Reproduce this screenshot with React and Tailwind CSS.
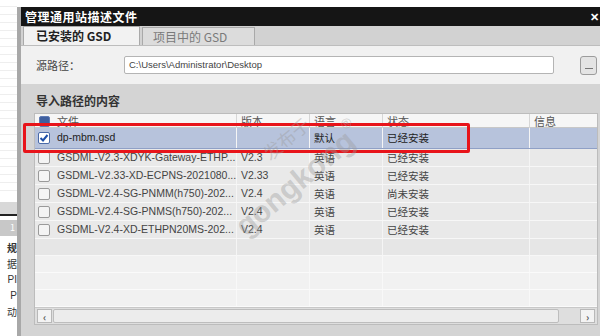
import React from 'react';

const cjk = { fontFamily: '"Noto Sans CJK SC", "Liberation Sans", sans-serif' };
const latin = { fontFamily: '"Liberation Sans", sans-serif' };

const rows = [
  { file: 'dp-mbm.gsd', ver: '', lang: '默认', state: '已经安装', checked: true },
  { file: 'GSDML-V2.3-XDYK-Gateway-ETHP...', ver: 'V2.3', lang: '英语', state: '已经安装' },
  { file: 'GSDML-V2.33-XD-ECPNS-2021080...', ver: 'V2.33', lang: '英语', state: '已经安装' },
  { file: 'GSDML-V2.4-SG-PNMM(h750)-202...', ver: 'V2.4', lang: '英语', state: '尚未安装' },
  { file: 'GSDML-V2.4-SG-PNMS(h750)-202...', ver: 'V2.4', lang: '英语', state: '已经安装' },
  { file: 'GSDML-V2.4-XD-ETHPN20MS-202...', ver: 'V2.4', lang: '英语', state: '已经安装' },
];

const cols = 'grid grid-cols-[18px_184px_73px_73px_147px_1fr]';

function Box({ checked }) {
  return (
    <div
      className={
        'w-[12px] h-[12px] border rounded-[2px] flex items-center justify-center ' +
        (checked ? 'border-[#4a6aa8] bg-white' : 'border-[#9a9a9a] bg-[#f4f4f4]')
      }
    >
      {checked && (
        <svg width="10" height="10" viewBox="0 0 10 10">
          <path d="M1.5 5 L4 7.5 L8.5 2" stroke="#1d4fa8" strokeWidth="2" fill="none" />
        </svg>
      )}
    </div>
  );
}

function EmptyRow({ dark }) {
  const line = dark ? 'border-r border-[#f5f5f5]' : 'border-r border-[#f8f8f8]';
  return (
    <div className={cols + ' h-[17px] border-b ' + (dark ? 'bg-[#e6e6e6] border-[#f7f7f7]' : 'bg-[#f1f1f1] border-[#fafafa]')}>
      <div />
      <div className={line} />
      <div className={line} />
      <div className={line} />
      <div className={line} />
      <div />
    </div>
  );
}

export default function App() {
  return (
    <div className="w-[600px] h-[336px] overflow-hidden flex bg-white text-[#333]" style={cjk}>
      {/* left background panel */}
      <div className="w-[17px] flex flex-col bg-white overflow-hidden">
        <div className="h-[200px] flex flex-col gap-[7px] pt-[6px]">
          {Array.from({ length: 24 }).map((_, i) => (
            <div key={i} className="h-px bg-[#eeeeee]" />
          ))}
        </div>
        <div className="h-[12px] bg-[#d8d8d8] mt-[2px]" />
        <div className="h-[2px] bg-[#222]" />
        <div className="h-[16px] bg-[#c8c8c8] mt-[4px] flex justify-end pr-[2px] text-[9px] text-white leading-[16px]">1</div>
        <div className="flex flex-col items-end text-[10px] leading-[16px] font-bold text-[#333] whitespace-nowrap mt-[4px]">
          <span>规</span>
          <span className="font-normal">据</span>
          <span className="font-normal" style={latin}>PI</span>
          <span className="font-normal" style={latin}>P</span>
          <span className="font-normal">动</span>
        </div>
      </div>

      {/* dialog */}
      <div className="flex-1 flex flex-col border-l-[4px] border-[#a8a8a8] mt-[7px] bg-[#d4d4d4] relative">
        {/* title */}
        <div className="h-[19px] bg-[#151515] flex items-center justify-between pl-[4px] pr-[1px] text-white">
          <span className="text-[12px] font-bold tracking-[0.5px]" style={{ fontFamily: '"Noto Sans CJK SC", serif' }}>管理通用站描述文件</span>
          <span className="text-[11px] font-bold">✕</span>
        </div>

        {/* tabs */}
        <div className="h-[20px] bg-[#d2d2d2] flex items-end pl-[2px] border-b border-[#bdbdbd]">
          <div className="h-[19px] w-[117px] bg-[#f2f2f2] border border-b-0 border-[#a9a9a9] flex items-center pl-[12px] text-[12px] font-bold text-[#222]">
            已安装的 GSD
          </div>
          <div className="h-[18px] w-[113px] ml-[2px] bg-[#dcdcdc] border border-b-0 border-[#a9a9a9] flex items-center pl-[10px] text-[12px] text-[#7a7a7a]">
            项目中的 GSD
          </div>
        </div>

        {/* source path */}
        <div className="h-[38px] bg-[#f1f1f1] flex items-center pl-[15px] pr-[3px]">
          <span className="w-[88px] text-[11px] text-[#444]">源路径：</span>
          <div className="w-[430px] h-[18px] bg-white border border-[#b4b4b4] rounded-[2px] flex items-center pl-[4px] text-[9.5px] text-[#444]" style={latin}>
            C:\Users\Administrator\Desktop
          </div>
          <div className="ml-auto w-[17px] h-[19px] border border-[#9c9c9c] rounded-[3px] bg-[#e4e4e4] flex items-end justify-center pb-[5px]">
            <div className="w-[8px] h-px bg-[#777]" />
          </div>
        </div>

        {/* contents */}
        <div className="flex-1 flex flex-col pl-[13px] pr-[2px] pt-[8px]">
          <div className="text-[12px] font-bold text-[#333] pl-[2px] h-[21px] leading-[18px]">导入路径的内容</div>

          <div className="flex flex-col border border-[#bcbcbc] bg-[#f0f0f0]">
            {/* header */}
            <div className={cols + ' h-[14px] bg-[#f6f6f6] border-b border-[#c8c8c8] text-[11px] text-[#555] leading-[14px]'}>
              <div className="flex items-center justify-center">
                <div className="w-[11px] h-[11px] border border-[#5f7bb5] bg-[#3f5f9f] rounded-[2px]" />
              </div>
              <div className="pl-[4px] border-r border-[#d6d6d6]">文件</div>
              <div className="pl-[4px] border-r border-[#d6d6d6]">版本</div>
              <div className="pl-[4px] border-r border-[#d6d6d6]">语言</div>
              <div className="pl-[4px] border-r border-[#d6d6d6]">状态</div>
              <div className="pl-[4px]">信息</div>
            </div>

            {rows.map((r, i) => (
              <div
                key={i}
                className={
                  cols +
                  ' text-[10.5px] border-b ' +
                  (r.checked
                    ? 'h-[21px] bg-[#b7c3dc] border-[#8fa0c6] text-[#222]'
                    : 'h-[18px] bg-[#e9e9e9] border-[#f7f7f7] text-[#444]')
                }
              >
                <div className="flex items-center justify-center">
                  <Box checked={r.checked} />
                </div>
                <div className="pl-[4px] flex items-center border-r border-[#f5f5f5] whitespace-nowrap overflow-hidden" style={latin}>
                  {r.file}
                </div>
                <div className="pl-[4px] flex items-center border-r border-[#f5f5f5]" style={latin}>{r.ver}</div>
                <div className="pl-[4px] flex items-center border-r border-[#f5f5f5]">{r.lang}</div>
                <div className="pl-[4px] flex items-center border-r border-[#f5f5f5]">{r.state}</div>
                <div />
              </div>
            ))}

            <EmptyRow dark />
            <EmptyRow />
            <EmptyRow />
            <EmptyRow />

            {/* scrollbar */}
            <div className="h-[17px] bg-[#dedede] border-t border-[#c8c8c8] flex items-center px-[2px] gap-[1px]">
              <div className="w-[15px] h-[14px] bg-[#f3f3f3] border border-[#b8b8b8] flex items-center justify-center text-[10px] font-bold text-[#555]">‹</div>
              <div className="w-[506px] h-[14px] bg-[#ececec] border border-[#bdbdbd] rounded-[2px]" />
              <div className="ml-auto w-[15px] h-[14px] bg-[#f3f3f3] border border-[#b8b8b8] flex items-center justify-center text-[10px] font-bold text-[#555]">›</div>
            </div>
          </div>
        </div>

        {/* red highlight */}
        <div className="absolute left-[2px] top-[116px] w-[447px] h-[30px] border-[3px] border-[#e8141a] rounded-[2px] pointer-events-none" />

        {/* watermark */}
        <div
          className="absolute left-[200px] top-[150px] -rotate-[40deg] text-[30px] font-bold text-[#9a9a9a]/40 pointer-events-none whitespace-nowrap"
          style={latin}
        >
          gongkong<span className="text-[14px] align-top">®</span>
        </div>
        <div className="absolute left-[238px] top-[118px] -rotate-[40deg] text-[18px] text-[#9a9a9a]/40 pointer-events-none whitespace-nowrap">
          发布于
        </div>
      </div>
    </div>
  );
}
